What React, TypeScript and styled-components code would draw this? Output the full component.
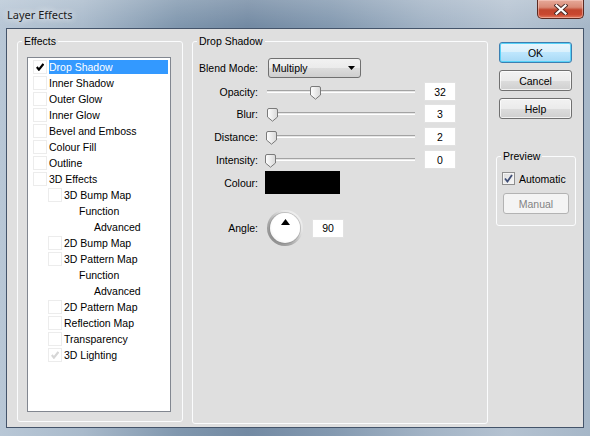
import styled, { createGlobalStyle } from 'styled-components'

const GlobalStyle = createGlobalStyle`
  html, body { margin: 0; padding: 0; background: #7d93ab; }
  * { box-sizing: border-box; }
`

const uiFont = `'Liberation Sans', Arial, sans-serif`

const Window = styled.div`
  width: 590px;
  height: 436px;
  display: flex;
  flex-direction: column;
  font-family: ${uiFont};
  font-size: 10.5px;
  color: #000;
  background:
    linear-gradient(180deg, rgba(255, 255, 255, 0.18), rgba(255, 255, 255, 0) 26px),
    linear-gradient(90deg, #b8c7d6 0%, #a9bacb 14%, #8097ae 30%, #738aa3 42%, #8399b0 56%, #a2b3c5 72%, #b4c2d1 86%, #a6b7c8 100%);
`

const TitleBar = styled.div`
  height: 28px;
  display: flex;
  justify-content: space-between;
  align-items: flex-start;
`

const Title = styled.div`
  margin: 7px 0 0 7px;
  font-family: 'Noto Sans', ${uiFont};
  font-size: 11px;
  line-height: 16px;
  color: #1b1b1b;
  text-shadow: 0 0 6px rgba(255, 255, 255, 0.9), 0 0 10px rgba(255, 255, 255, 0.6);
`

const CloseButton = styled.div`
  width: 47px;
  height: 19px;
  margin-right: 6px;
  display: flex;
  align-items: center;
  justify-content: center;
  border: 1px solid #5a2a22;
  border-top: none;
  border-radius: 0 0 5px 5px;
  background: linear-gradient(180deg, #e6a999 0%, #d98a76 40%, #c2462e 55%, #c9472f 80%, #e2795c 100%);
  box-shadow: inset 0 0 0 1px rgba(255, 220, 210, 0.45);
`

const Client = styled.div`
  flex: 1;
  margin: 0 6px 8px 6px;
  border: 1px solid #44546a;
  background: #dfdfdf;
  display: flex;
  align-items: flex-start;
  padding: 6px 0 0 10px;
`

const Group = styled.fieldset<{ $w: number; $h: number; $left?: number }>`
  margin: 0 0 0 ${({ $left }) => $left ?? 0}px;
  padding: 0;
  width: ${({ $w }) => $w}px;
  height: ${({ $h }) => $h}px;
  border: 1px solid #fbfcfd;
  border-radius: 3px;
  min-width: 0;
`

const Legend = styled.legend`
  margin-left: 4px;
  padding: 0 2px;
  line-height: 13px;
  font-size: 10.5px;
`

const EffectsInner = styled.div`
  padding: 9px 0 0 9px;
`

const List = styled.div`
  width: 144px;
  height: 355px;
  background: #fff;
  border: 1px solid #828790;
  padding-top: 1px;
  display: flex;
  flex-direction: column;
`

const ListRow = styled.div<{ $level: number }>`
  height: 16px;
  display: flex;
  align-items: center;
  padding-left: ${({ $level }) => 5 + $level * 15}px;
`

const Check = styled.div`
  width: 14px;
  height: 14px;
  margin-right: 2px;
  flex: none;
  border: 1px solid #ececec;
  display: flex;
  align-items: center;
  justify-content: center;
`

const Spacer = styled.div`
  width: 16px;
  flex: none;
`

const ItemText = styled.span<{ $selected?: boolean }>`
  line-height: 14px;
  white-space: nowrap;
  ${({ $selected }) =>
    $selected &&
    `
    flex: 1;
    margin-right: 2px;
    background: #3399ff;
    color: #fff;
  `}
`

const DsInner = styled.div`
  padding: 10px 0 0 5px;
  display: flex;
  flex-direction: column;
`

const Row = styled.div<{ $top?: number; $h?: number }>`
  display: flex;
  align-items: center;
  height: ${({ $h }) => $h ?? 19}px;
  margin-top: ${({ $top }) => $top ?? 0}px;
`

const Label = styled.div`
  width: 60px;
  text-align: right;
  margin-right: 7px;
  white-space: nowrap;
`

const Select = styled.div`
  margin-left: 3px;
  width: 93px;
  height: 20px;
  border: 1px solid #707070;
  border-radius: 3px;
  background: linear-gradient(180deg, #f2f2f2 0%, #ebebeb 50%, #dddddd 50%, #cfcfcf 100%);
  display: flex;
  align-items: center;
  justify-content: space-between;
  padding: 0 5px 0 3px;
`

const SliderBox = styled.div`
  position: relative;
  width: 150px;
  height: 19px;
  display: flex;
  align-items: center;
`

const Track = styled.div`
  margin-left: 2px;
  flex: 1;
  height: 3px;
  border-top: 1px solid #a3a3a3;
  border-bottom: 1px solid #ffffff;
  background: #e6e6e6;
`

const Thumb = styled.svg`
  position: absolute;
  top: 4px;
`

const NumBox = styled.div<{ $gap?: number }>`
  margin-left: ${({ $gap }) => $gap ?? 9}px;
  width: 32px;
  height: 19px;
  background: #fff;
  border: 1px solid #e2e2e2;
  display: flex;
  align-items: center;
  justify-content: center;
`

const Swatch = styled.div`
  width: 75px;
  height: 23px;
  background: #000;
`

const Dial = styled.div`
  margin-left: 2px;
  width: 36px;
  height: 36px;
  border-radius: 50%;
  padding: 3px;
  background: linear-gradient(45deg, #7e7e7e 0%, #a8a8a8 35%, #e6e6e6 70%, #f6f6f6 100%);
`

const DialFace = styled.div`
  width: 30px;
  height: 30px;
  border-radius: 50%;
  background: radial-gradient(circle at 55% 45%, #ffffff 0 60%, #f1f1f1 80%, #d0d0d0 100%);
  box-shadow: 0 0 0 1px rgba(120, 120, 120, 0.35);
  display: flex;
  justify-content: center;
  padding-top: 6px;
`

const Side = styled.div`
  margin-left: 8px;
  padding-top: 7px;
  display: flex;
  flex-direction: column;
  width: 80px;
`

const Button = styled.div<{ $primary?: boolean }>`
  margin-left: 3px;
  margin-bottom: 7px;
  width: 73px;
  height: 21px;
  border-radius: 3px;
  display: flex;
  align-items: center;
  justify-content: center;
  border: 1px solid ${({ $primary }) => ($primary ? '#3c7fb1' : '#707070')};
  background: ${({ $primary }) =>
    $primary
      ? 'linear-gradient(180deg, #eaf6fd 0%, #d9f0fc 50%, #bee6fd 50%, #a7d9f5 100%)'
      : 'linear-gradient(180deg, #f2f2f2 0%, #ebebeb 50%, #dddddd 50%, #cfcfcf 100%)'};
  box-shadow: ${({ $primary }) =>
    $primary ? 'inset 0 0 0 1px #58d2f8' : 'inset 0 0 0 1px rgba(255,255,255,0.7)'};
`

const PreviewGroup = styled(Group)`
  margin-top: 24px;
`

const PreviewInner = styled.div`
  padding: 9px 0 0 5px;
  display: flex;
  flex-direction: column;
`

const CheckRow = styled.div`
  display: flex;
  align-items: center;
  height: 13px;
  gap: 4px;
`

const WinCheck = styled.div`
  width: 13px;
  height: 13px;
  border: 1px solid #8f8f8f;
  background: linear-gradient(135deg, #dcdcdc, #f8f8f8);
  box-shadow: inset 0 0 0 1px #f4f4f4;
  display: flex;
  align-items: center;
  justify-content: center;
`

const DisabledButton = styled.div`
  margin: 8px 0 0 1px;
  width: 66px;
  height: 21px;
  border: 1px solid #b3b3b3;
  border-radius: 3px;
  background: #f4f4f4;
  color: #838383;
  display: flex;
  align-items: center;
  justify-content: center;
`

type Effect = { label: string; level: number; box: boolean; checked?: 'on' | 'dim'; selected?: boolean }

const effects: Effect[] = [
  { label: 'Drop Shadow', level: 0, box: true, checked: 'on', selected: true },
  { label: 'Inner Shadow', level: 0, box: true },
  { label: 'Outer Glow', level: 0, box: true },
  { label: 'Inner Glow', level: 0, box: true },
  { label: 'Bevel and Emboss', level: 0, box: true },
  { label: 'Colour Fill', level: 0, box: true },
  { label: 'Outline', level: 0, box: true },
  { label: '3D Effects', level: 0, box: true },
  { label: '3D Bump Map', level: 1, box: true },
  { label: 'Function', level: 2, box: false },
  { label: 'Advanced', level: 3, box: false },
  { label: '2D Bump Map', level: 1, box: true },
  { label: '3D Pattern Map', level: 1, box: true },
  { label: 'Function', level: 2, box: false },
  { label: 'Advanced', level: 3, box: false },
  { label: '2D Pattern Map', level: 1, box: true },
  { label: 'Reflection Map', level: 1, box: true },
  { label: 'Transparency', level: 1, box: true },
  { label: '3D Lighting', level: 1, box: true, checked: 'dim' },
]

// max is the slider range; thumb travels 140px on a 150px track
const sliders = [
  { label: 'Opacity:', value: 32, max: 100, top: 5 },
  { label: 'Blur:', value: 3, max: 250, top: 3 },
  { label: 'Distance:', value: 2, max: 250, top: 4 },
  { label: 'Intensity:', value: 0, max: 250, top: 4 },
]

const Tick = ({ color }: { color: string }) => (
  <svg width="8" height="8" viewBox="0 0 8 8">
    <path d="M0.8 4 L2.9 6.6 L7.4 0.9" fill="none" stroke={color} strokeWidth="2.2" />
  </svg>
)

const SliderThumb = ({ left }: { left: number }) => (
  <Thumb width="11" height="14" viewBox="0 0 11 14" style={{ left }}>
    <defs>
      <linearGradient id="tg" x1="0" y1="0" x2="1" y2="0">
        <stop offset="0" stopColor="#ffffff" />
        <stop offset="1" stopColor="#d8d8d8" />
      </linearGradient>
    </defs>
    <path
      d="M2 0.5 H9 A1.5 1.5 0 0 1 10.5 2 V9 L5.5 13.2 L0.5 9 V2 A1.5 1.5 0 0 1 2 0.5 Z"
      fill="url(#tg)"
      stroke="#7a7a7a"
    />
  </Thumb>
)

export default function App() {
  return (
    <>
      <GlobalStyle />
      <Window>
        <TitleBar>
          <Title>Layer Effects</Title>
          <CloseButton>
            <svg width="14" height="11" viewBox="0 0 14 11">
              <path d="M2.5 1.5 L11.5 9.5 M11.5 1.5 L2.5 9.5" stroke="#4a2a26" strokeWidth="4" strokeLinecap="square" />
              <path d="M2.5 1.5 L11.5 9.5 M11.5 1.5 L2.5 9.5" stroke="#ffffff" strokeWidth="2.2" strokeLinecap="square" />
            </svg>
          </CloseButton>
        </TitleBar>
        <Client>
          <Group $w={166} $h={387}>
            <Legend>Effects</Legend>
            <EffectsInner>
              <List>
                {effects.map((e, i) => (
                  <ListRow key={i} $level={e.level}>
                    {e.box ? (
                      <Check>{e.checked && <Tick color={e.checked === 'on' ? '#000' : '#d6d6d6'} />}</Check>
                    ) : (
                      <Spacer />
                    )}
                    <ItemText $selected={e.selected}>{e.label}</ItemText>
                  </ListRow>
                ))}
              </List>
            </EffectsInner>
          </Group>

          <Group $w={296} $h={389} $left={9}>
            <Legend>Drop Shadow</Legend>
            <DsInner>
              <Row>
                <Label>Blend Mode:</Label>
                <Select>
                  <span>Multiply</span>
                  <svg width="7" height="4" viewBox="0 0 7 4">
                    <path d="M0 0 H7 L3.5 4 Z" fill="#000" />
                  </svg>
                </Select>
              </Row>
              {sliders.map((s) => (
                <Row key={s.label} $top={s.top}>
                  <Label>{s.label}</Label>
                  <SliderBox>
                    <Track />
                    <SliderThumb left={Math.round((s.value / s.max) * 140)} />
                  </SliderBox>
                  <NumBox>{s.value}</NumBox>
                </Row>
              ))}
              <Row $top={2} $h={23}>
                <Label>Colour:</Label>
                <Swatch />
              </Row>
              <Row $top={16} $h={36}>
                <Label>Angle:</Label>
                <Dial>
                  <DialFace>
                    <svg width="9" height="6" viewBox="0 0 9 6">
                      <path d="M4.5 0 L9 6 H0 Z" fill="#000" />
                    </svg>
                  </DialFace>
                </Dial>
                <NumBox $gap={9}>90</NumBox>
              </Row>
            </DsInner>
          </Group>

          <Side>
            <Button $primary>OK</Button>
            <Button>Cancel</Button>
            <Button>Help</Button>
            <PreviewGroup $w={80} $h={76}>
              <Legend>Preview</Legend>
              <PreviewInner>
                <CheckRow>
                  <WinCheck>
                    <svg width="9" height="9" viewBox="0 0 9 9">
                      <path d="M1 4.5 L3.4 7.5 L8 1" fill="none" stroke="#3f4e76" strokeWidth="1.8" />
                    </svg>
                  </WinCheck>
                  <span>Automatic</span>
                </CheckRow>
                <DisabledButton>Manual</DisabledButton>
              </PreviewInner>
            </PreviewGroup>
          </Side>
        </Client>
      </Window>
    </>
  )
}
